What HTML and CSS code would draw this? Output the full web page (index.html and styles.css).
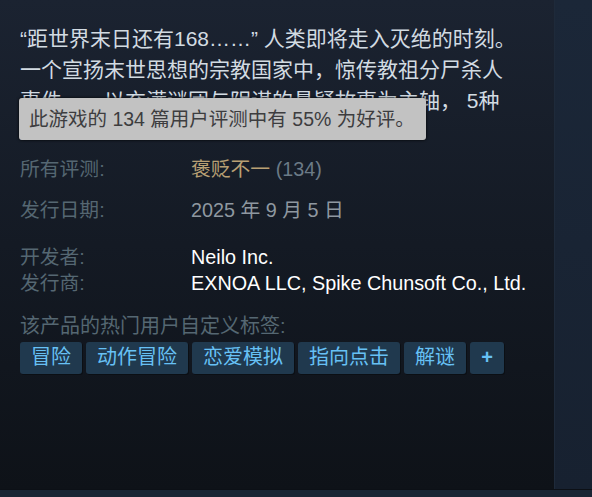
FILE: index.html
```html
<!DOCTYPE html>
<html lang="zh-CN">
<head>
    <meta charset="UTF-8">
    <title>游戏信息</title>
    <link rel="stylesheet" href="styles.css">
</head>
<body>
    <div class="page">
        <div class="main">
            <p class="snippet">“距世界末日还有168……” 人类即将走入灭绝的时刻。一个宣扬末世思想的宗教国家中，惊传教祖分尸杀人事件——以充满谜团与阴谋的悬疑故事为主轴， 5种结局等待你亲手揭开真相。</p>

            <div class="tooltip">此游戏的 134 篇用户评测中有 55% 为好评。</div>

            <div class="row review-row">
                <span class="label">所有评测:</span>
                <span class="value"><span class="mixed">褒贬不一</span> <span class="count">(134)</span></span>
            </div>
            <div class="row date-row">
                <span class="label">发行日期:</span>
                <span class="value date">2025 年 9 月 5 日</span>
            </div>
            <div class="row dev-row">
                <span class="label">开发者:</span>
                <span class="value link">Neilo Inc.</span>
            </div>
            <div class="row">
                <span class="label">发行商:</span>
                <span class="value link">EXNOA LLC, Spike Chunsoft Co., Ltd.</span>
            </div>

            <div class="tags-title">该产品的热门用户自定义标签:</div>
            <div class="tags">
                <a href="#" class="tag">冒险</a>
                <a href="#" class="tag">动作冒险</a>
                <a href="#" class="tag">恋爱模拟</a>
                <a href="#" class="tag">指向点击</a>
                <a href="#" class="tag">解谜</a>
                <a href="#" class="tag plus">+</a>
            </div>
        </div>
        <div class="side"></div>
    </div>
    <div class="bottom"></div>
</body>
</html>
```

FILE: styles.css
```css
* {
    margin: 0;
    padding: 0;
    box-sizing: border-box;
}

body {
    font-family: 'Liberation Sans', 'Noto Sans CJK SC', sans-serif;
    background-color: #1a2535;
    width: 592px;
    height: 497px;
    overflow: hidden;
}

.page {
    display: flex;
    height: 489px;
}

.main {
    position: relative;
    width: 554px;
    padding: 23px 0 0 20px;
    background: linear-gradient(to bottom, #1b2331 0%, #141a24 50%, #0e1218 100%);
}

.side {
    flex: 1;
    background: linear-gradient(to bottom, #1b2738 0%, #172130 100%);
    border-left: 1px solid #1e2a3a;
}

.bottom {
    height: 8px;
    background-color: #1a2534;
    border-top: 1px solid #0c1016;
}

.snippet {
    width: 500px;
    font-size: 21px;
    line-height: 31px;
    color: #d2dbe2;
    height: 117px;
    overflow: hidden;
}

.tooltip {
    position: absolute;
    left: 19px;
    top: 98px;
    width: 407px;
    height: 42px;
    padding: 0 10px;
    background-color: #c2c2c2;
    color: #3d3d3f;
    font-size: 19.5px;
    line-height: 42px;
    white-space: nowrap;
    border-radius: 3px;
    box-shadow: 0 0 3px #000;
}

.row {
    display: flex;
    font-size: 19.8px;
    line-height: 26px;
}

.review-row {
    margin-top: 16px;
}

.date-row {
    margin-top: 15px;
}

.dev-row {
    margin-top: 21px;
}

.label {
    width: 171px;
    color: #556772;
}

.mixed {
    color: #b9a074;
}

.count {
    color: #6b7a86;
}

.date {
    color: #8f98a0;
}

.link {
    color: #ffffff;
}

.tags-title {
    margin-top: 17px;
    font-size: 20px;
    line-height: 26px;
    color: #556772;
}

.tags {
    display: flex;
    gap: 4px;
    margin-top: 3px;
}

.tag {
    display: inline-block;
    padding: 0 11px;
    height: 32px;
    line-height: 31px;
    font-size: 20px;
    color: #67c1f5;
    background-color: #20394e;
    border-radius: 3px;
    text-decoration: none;
    box-shadow: 1px 1px 0 0 #0b0f14;
}

.plus {
    width: 34px;
    padding: 0;
    text-align: center;
    font-weight: bold;
}
```
